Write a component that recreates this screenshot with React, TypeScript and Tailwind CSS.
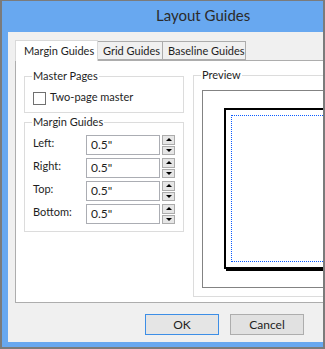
const font = "font-['Segoe_UI','Lato','Noto_Sans',sans-serif]"

const Spinner = () => (
    <div className="flex flex-col w-[13px] h-[20px] ml-[2px] gap-px">
        <div className="flex-1 bg-[#e6e6e6] border border-[#acacac] flex items-center justify-center">
            <div className="w-0 h-0 border-l-[3px] border-r-[3px] border-b-[3px] border-l-transparent border-r-transparent border-b-black" />
        </div>
        <div className="flex-1 bg-[#e6e6e6] border border-[#acacac] flex items-center justify-center">
            <div className="w-0 h-0 border-l-[3px] border-r-[3px] border-t-[3px] border-l-transparent border-r-transparent border-t-black" />
        </div>
    </div>
)

const Field = ({ label }: { label: string }) => (
    <div className="flex items-center h-[20px]">
        <span className="w-[53px] text-[#1e1e1e] -mt-[3px]">{label}</span>
        <div className="w-[74px] h-[20px] border border-[#abadb3] bg-white pl-[4px] flex items-center text-[12px] text-[#1e1e1e]">0.5"</div>
        <Spinner />
    </div>
)

const Tab = ({ label, active, width }: any) => (
    <div
        className={`${width} ${active
            ? 'h-[21px] bg-white border border-b-0 border-[#d9d9d9] z-10 -mb-px pl-[8px] pt-[2px]'
            : 'h-[19px] bg-[#f0f0f0] border border-[#acacac] -ml-px pl-[5px] pt-[1px]'} whitespace-nowrap text-[#1e1e1e] leading-[16px]`}
    >
        {label}
    </div>
)

export default function App() {
    return (
        <div className={`w-[325px] h-[349px] bg-[#68a8f0] border-t border-l-2 border-r-2 border-b-2 border-[#7b7b7b] flex flex-col text-[11px] ${font}`}>
            <div className="h-[31px] shrink-0 flex items-center pl-[154px] text-[15px] text-[#2b2b2b] pb-[2px]">Layout Guides</div>

            <div className="flex-1 ml-[6px] mb-[5px] bg-[#f0f0f0] overflow-hidden flex flex-col pt-[7px] pl-[7px]">
                <div className="flex items-end h-[21px] shrink-0">
                    <Tab label="Margin Guides" active width="w-[83px]" />
                    <Tab label="Grid Guides" width="w-[66px]" />
                    <Tab label="Baseline Guides" width="w-[84px]" />
                </div>

                <div className="w-[340px] h-[243px] shrink-0 bg-white border border-[#adadad] flex pl-[8px]">
                    <div className="w-[160px] flex flex-col">
                        <fieldset className="mt-[7px] border border-[#dcdcdc] px-[8px] pb-[6px]">
                            <legend className="px-[1px] -ml-[1px] leading-[16px] text-[#1e1e1e]">Master Pages</legend>
                            <div className="mt-[6px] h-[16px] flex items-center gap-[4px] text-[#1e1e1e]">
                                <div className="w-[13px] h-[13px] border border-[#707070] bg-white" />
                                <span className="-mt-[2px]">Two-page master</span>
                            </div>
                        </fieldset>

                        <fieldset className="mt-px border border-[#dcdcdc] px-[8px] pb-[7px]">
                            <legend className="px-[1px] -ml-[1px] leading-[16px] text-[#1e1e1e]">Margin Guides</legend>
                            <div className="mt-[5px] flex flex-col gap-[3px]">
                                <Field label="Left:" />
                                <Field label="Right:" />
                                <Field label="Top:" />
                                <Field label="Bottom:" />
                            </div>
                        </fieldset>
                    </div>

                    <fieldset className="ml-[9px] mt-[6px] w-[160px] h-[230px] border border-[#dcdcdc] pl-[8px] pb-[8px]">
                        <legend className="px-[1px] -ml-[1px] leading-[16px] text-[#1e1e1e]">Preview</legend>
                        <div className="mt-[7px] h-[198px] border border-[#838383] pl-[21px] pt-[17px]">
                            <div className="w-[140px] h-[161px] border-2 border-black shadow-[2px_2px_0_#000] pl-[5px] pt-[5px]">
                                <div className="w-[120px] h-[147px] border border-dotted border-[#0a5cff]" />
                            </div>
                        </div>
                    </fieldset>
                </div>

                <div className="flex justify-end gap-[11px] pr-[19px] mt-[11px] shrink-0">
                    <button className="w-[74px] h-[21px] border border-[#3d8ee6] bg-[#e5e5e5] text-[12px] text-[#1e1e1e] leading-[18px]">OK</button>
                    <button className="w-[74px] h-[21px] border border-[#adadad] bg-[#e1e1e1] text-[12px] text-[#1e1e1e] leading-[18px]">Cancel</button>
                </div>
            </div>
        </div>
    )
}
